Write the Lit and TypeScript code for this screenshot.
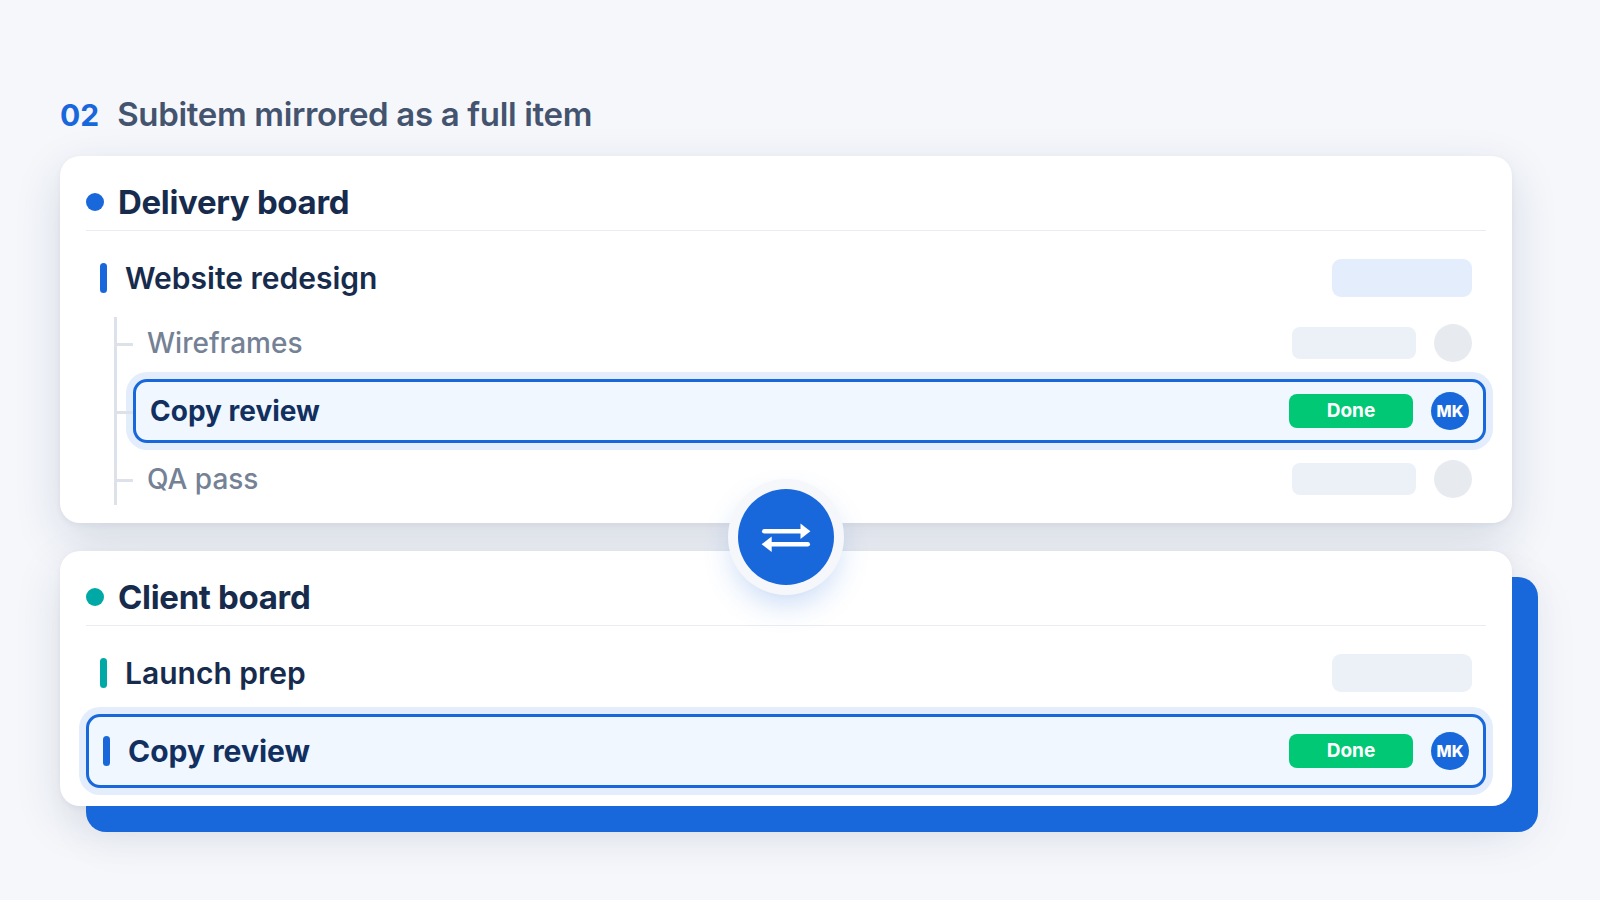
import { LitElement, html, css, nothing } from "lit";
import { customElement, property } from "lit/decorators.js";
import { classMap } from "lit/directives/class-map.js";

type Row = { name: string; mirrored?: boolean };

@customElement("item-status")
class ItemStatus extends LitElement {
  @property({ type: Boolean }) done = false;

  static styles = css`
    :host {
      display: flex;
      align-items: center;
      gap: 18px;
    }
    .pill {
      width: 124px;
      height: 32px;
      border-radius: 8px;
      background: #ecf0f7;
    }
    .pill.done {
      height: 34px;
      line-height: 34px;
      background: #00c875;
      color: #fff;
      font-size: 19px;
      font-weight: 700;
      text-align: center;
    }
    .avatar {
      width: 38px;
      height: 38px;
      border-radius: 50%;
      background: #e7ebf0;
    }
    .avatar.person {
      line-height: 38px;
      background: #1868db;
      color: #fff;
      font-size: 16px;
      font-weight: 800;
      text-align: center;
    }
  `;

  render() {
    return html`
      <span class=${classMap({ pill: true, done: this.done })}>${this.done ? "Done" : nothing}</span>
      <span class=${classMap({ avatar: true, person: this.done })}>${this.done ? "MK" : nothing}</span>
    `;
  }
}

@customElement("app-root")
class AppRoot extends LitElement {
  private subitems: Row[] = [
    { name: "Wireframes" },
    { name: "Copy review", mirrored: true },
    { name: "QA pass" },
  ];

  static styles = css`
    :host {
      display: flex;
      flex-direction: column;
      justify-content: center;
      box-sizing: border-box;
      min-height: 100vh;
      padding: 40px 88px 40px 60px;
      background: #f5f7fb;
      color: #172b4d;
      font-family: Inter, "Liberation Sans", sans-serif;
    }
    * {
      box-sizing: border-box;
    }
    h1,
    h2,
    ul {
      margin: 0;
      padding: 0;
      list-style: none;
    }
    .title {
      display: flex;
      align-items: baseline;
      gap: 18px;
      height: 40px;
      margin-bottom: 22px;
      color: #44546f;
      font-size: 33px;
      font-weight: 600;
      line-height: 40px;
      letter-spacing: -0.01em;
    }
    .step {
      color: #1868db;
      font-size: 30px;
      font-weight: 700;
      letter-spacing: 0;
    }
    .boards {
      position: relative;
      display: grid;
      grid-template-rows: auto 28px auto;
    }
    .board {
      padding: 26px 26px 18px;
      border-radius: 20px;
      background: #fff;
      box-shadow: 0 2px 6px rgba(23, 43, 77, 0.05), 0 16px 48px rgba(23, 43, 77, 0.14);
    }
    .board.client {
      grid-row: 3;
      box-shadow: 26px 26px 0 #1868db, 0 2px 6px rgba(23, 43, 77, 0.05),
        0 16px 48px rgba(23, 43, 77, 0.12), 26px 34px 48px rgba(23, 43, 77, 0.06);
    }
    .head {
      display: flex;
      align-items: center;
      gap: 14px;
      margin-bottom: 13px;
      padding-bottom: 8px;
      border-bottom: 1px solid #e9ecf2;
      font-size: 33px;
      font-weight: 700;
      line-height: 40px;
      letter-spacing: -0.01em;
    }
    .dot {
      width: 18px;
      height: 18px;
      border-radius: 50%;
      background: #1868db;
    }
    .client .dot,
    .teal {
      background: #00a9a5;
    }
    .row {
      display: flex;
      align-items: center;
      justify-content: space-between;
      height: 68px;
      padding: 0 14px;
      font-size: 30px;
      font-weight: 600;
    }
    .name {
      display: flex;
      align-items: center;
      gap: 18px;
    }
    .bar {
      width: 7px;
      height: 30px;
      border-radius: 4px;
      background: #1868db;
    }
    .bar.teal {
      background: #00a9a5;
    }
    .field {
      width: 140px;
      height: 38px;
      border-radius: 9px;
      background: #e3edfc;
    }
    .field.plain {
      background: #ecf0f7;
    }
    .tree {
      display: grid;
      gap: 10px;
      margin: 5px 0 0 28px;
      padding-left: 16px;
      border-left: 3px solid #dde1ea;
    }
    .sub {
      position: relative;
      height: 52px;
      color: #758195;
      font-size: 28px;
      font-weight: 500;
    }
    .sub::before {
      content: "";
      position: absolute;
      top: 50%;
      left: -16px;
      width: 16px;
      height: 3px;
      background: #dde1ea;
    }
    .mirrored {
      border: 3px solid #1868db;
      border-radius: 14px;
      background: #f0f7ff;
      box-shadow: 0 0 0 7px rgba(24, 104, 219, 0.12);
      color: #12305f;
      font-weight: 700;
    }
    .sub.mirrored {
      height: 64px;
    }
    .sub.mirrored::before {
      left: -19px;
    }
    .client .mirrored {
      height: 74px;
      margin-top: 7px;
    }
    .swap {
      grid-row: 2;
      place-self: center;
      z-index: 1;
      display: grid;
      place-items: center;
      width: 96px;
      height: 96px;
      margin: -34px 0;
      border-radius: 50%;
      background: #1868db;
      box-shadow: 0 0 0 10px #f5f7fb, 0 14px 34px rgba(24, 104, 219, 0.32);
    }
  `;

  render() {
    return html`
      <h1 class="title"><span class="step">02</span><span>Subitem mirrored as a full item</span></h1>
      <div class="boards">
        <section class="board">
          <h2 class="head"><span class="dot"></span>Delivery board</h2>
          <div class="row">
            <span class="name"><span class="bar"></span>Website redesign</span>
            <span class="field"></span>
          </div>
          <ul class="tree">
            ${this.subitems.map(
              (s) => html`<li class=${classMap({ row: true, sub: true, mirrored: !!s.mirrored })}>
                <span>${s.name}</span><item-status ?done=${!!s.mirrored}></item-status>
              </li>`
            )}
          </ul>
        </section>
        <div class="swap">
          <svg width="50" height="30" viewBox="0 0 50 30" fill="#fff" role="img" aria-label="Synced both ways">
            <rect x="1" y="7" width="42" height="4.6" rx="2.3" />
            <path d="M39.5 1.4 49.4 9.2 39.5 17Z" />
            <rect x="7" y="19.9" width="42" height="4.6" rx="2.3" />
            <path d="M10.7 14.4.6 22.2 10.7 30Z" />
          </svg>
        </div>
        <section class="board client">
          <h2 class="head"><span class="dot"></span>Client board</h2>
          <div class="row">
            <span class="name"><span class="bar teal"></span>Launch prep</span>
            <span class="field plain"></span>
          </div>
          <div class="row mirrored">
            <span class="name"><span class="bar"></span>Copy review</span>
            <item-status done></item-status>
          </div>
        </section>
      </div>
    `;
  }
}
